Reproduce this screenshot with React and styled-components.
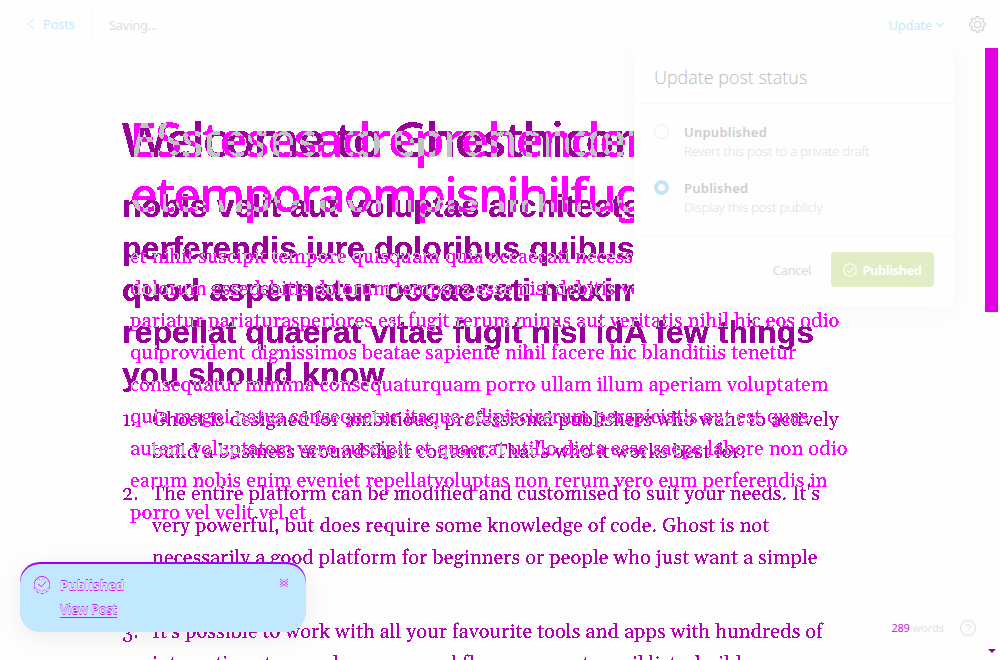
import React from 'react';
import styled, { createGlobalStyle } from 'styled-components';

const Global = createGlobalStyle`
  * { box-sizing: border-box; }
  body { margin: 0; background: #fefefe; font-family: 'Noto Sans', 'Open Sans', sans-serif; }
  p, h1, h2, ol { margin: 0; padding: 0; font-weight: 400; }
`;
const Screen = styled.div`
  position: relative; width: 1000px; height: 660px; overflow: hidden; background: #fefefe;
`;
const Header = styled.header`
  display: flex; align-items: center; height: 48px; padding: 0 14px 0 27px; font-size: 13px;
`;
const BackLink = styled.a`
  display: flex; align-items: center; gap: 8px; height: 36px; width: 65px;
  color: #c4e9fd; border-right: 1px solid #f6f7f8; letter-spacing: -0.2px;
`;
const Saving = styled.span`
  margin: 2px 0 0 17px; color: #dce1e4; letter-spacing: -0.28px;
`;
const UpdateTrigger = styled.span`
  display: flex; align-items: center; gap: 4px; margin: 2px 25px 0 auto; color: #c4e9fd; letter-spacing: -0.2px;
`;

/* Both revisions share one cell; the filter turns their coverage into diff colours. */
const Diff = styled.main`
  display: grid; height: 612px; background: #000; filter: url(#diff-colours);
  overflow: hidden; isolation: isolate;
`;
const Revision = styled.article`
  grid-area: 1 / 1; padding: 63px 0 0 ${p => p.$left}px; color: ${p => p.$channel};
  mix-blend-mode: screen; white-space: nowrap; min-height: 0;
`;
const Title = styled.h1`
  font: 500 48px/55px 'Noto Sans', 'Open Sans', sans-serif; letter-spacing: ${p => p.$track}px;
  -webkit-text-stroke: 0.3px currentColor;
`;
const Subhead = styled.h2`
  margin-top: 19px; font: 700 32px/42px 'Liberation Sans', Arial, sans-serif; letter-spacing: 0.07px;
`;
const Body = styled.p`
  margin-top: 20px; font: 400 20px/32px Gelasio, Georgia, 'Liberation Serif', serif; letter-spacing: 0.095px;
`;
const List = styled.ol`
  margin-top: 9px; color: #00f; list-style: none;
  font: 400 20px/32px Gelasio, Georgia, 'Liberation Serif', serif; letter-spacing: 0.095px;
`;
const Item = styled.li`
  display: grid; grid-template-columns: 30px auto; margin-bottom: 10px;
`;
const Line = styled.span`display: block;`;

const Popover = styled.section`
  position: absolute; left: 634px; top: 46px; width: 320px; height: 261px; background: #fefefe;
  border-radius: 4px; box-shadow: 1px 0 0 #fbfbfb, 0 6px 24px rgba(0, 0, 0, 0.025);
  display: flex; flex-direction: column;
`;
const PopTitle = styled.div`
  height: 58px; padding: 18px 20px 0; border-bottom: 1px solid #f8f9f9;
  font: 300 18px/26px 'Open Sans', 'Noto Sans', sans-serif; color: #b8bbbd; letter-spacing: -0.03px;
`;
const Options = styled.div`
  display: flex; flex-direction: column; gap: 16px; height: 133px; padding: 18px 20px;
  border-bottom: 1px solid #f8f9f9;
`;
const Option = styled.div`display: flex; gap: 15px; height: 40px;`;
const Radio = styled.span`
  width: 15px; height: 15px; margin-top: 2px; border-radius: 50%;
  border: ${p => (p.$on ? '4px solid #c2e5f8' : '1px solid #e6f1f7')};
`;
const OptionName = styled.div`
  font-size: 13px; line-height: 20px; font-weight: 600; color: #cbced0; letter-spacing: 0.24px;
`;
const OptionHint = styled.div`
  font: 300 13px/20px 'Open Sans', 'Noto Sans', sans-serif; margin-top: -1px; color: #d8dde0; letter-spacing: -0.17px;
`;
const Actions = styled.footer`
  display: flex; justify-content: flex-end; align-items: center; gap: 20px; padding: 15px 20px 0;
  font-size: 13px; color: #d8dcdf;
`;
const Cancel = styled.span`margin-top: 1px; letter-spacing: -0.35px;`;
const PublishButton = styled.button`
  display: flex; align-items: center; justify-content: center; gap: 6px; width: 103px; height: 35px;
  padding: 0 1px 0 0; border: 0; border-radius: 4px; background: #e1edc5; color: #fff;
  font: 700 13px 'Noto Sans', sans-serif; letter-spacing: -0.5px;
`;

const Toast = styled.aside`
  position: absolute; left: 20px; top: 564px; width: 286px; height: 68px; border-radius: 20px;
  background: #c2e8ff; box-shadow: 0 -2px 0 #90f, 0 4px 24px rgba(0, 0, 0, 0.07);
  display: flex; gap: 10px; padding: 11px 17px 0 14px;
`;
const ToastText = styled.div`
  flex: 1; display: flex; flex-direction: column; align-items: flex-start; gap: 6px; padding-top: 1px;
  font-size: 13px; line-height: 19px; color: #d6edfc;
  text-shadow: 0 1px 0 #e400f4, 0 -1px 0 #a01cff;
`;
const ToastTitle = styled.span`font-weight: 700; letter-spacing: 0.1px;`;
const ToastLink = styled.a`
  border-bottom: 1px solid #f0f; line-height: 16px; letter-spacing: -0.3px; font-weight: 500;
`;
const ScrollThumb = styled.div`
  position: absolute; right: 2px; top: 48px; width: 13px; height: 264px; background: #e000e0;
`;
const ScrollArrow = styled.div`
  position: absolute; left: 988px; top: 649px; border: solid transparent;
  border-width: 4px 4px 0; border-top-color: #909;
`;
const Status = styled.div`
  position: absolute; right: 24px; top: 620px; display: flex; align-items: center; gap: 16px;
  height: 16px; font-size: 11px; color: #dfe4e7;
`;
const Count = styled.span`
  margin-top: -1px;
  b { font-weight: 400; color: #c828d0; letter-spacing: -0.3px; }
`;

const CheckCircle = ({ size, stroke, width = 1.3 }) => (
  <svg width={size} height={size} viewBox="0 0 16 16" fill="none" stroke={stroke} strokeWidth={width}>
    <circle cx="8" cy="8" r="7.2" />
    <path d="M4.5 8.2 7.2 10.8 11.8 5.7" />
  </svg>
);

const DiffColours = () => (
  <svg width="0" height="0" style={{ display: 'block' }}>
    <filter id="diff-colours" x="0" y="0" width="100%" height="100%" colorInterpolationFilters="sRGB">
      <feComponentTransfer>
        <feFuncR type="discrete" tableValues="0 0 1 1 1" />
        <feFuncG type="discrete" tableValues="0 1 1" />
        <feFuncB type="discrete" tableValues="0 0 1 1 1" />
      </feComponentTransfer>
      <feColorMatrix values="0.333 0.667 0.58 0 0  0.5 0.5 0.5 0 0  0.333 0.667 0.58 0 0  0 0 0 1 0" />
      <feComponentTransfer>
        <feFuncR type="table" tableValues="0.996 1 0.6 0.753" />
        <feFuncG type="table" tableValues="0.996 0 0.77" />
        <feFuncB type="table" tableValues="0.996 1 0.6 0.765" />
      </feComponentTransfer>
    </filter>
  </svg>
);

const title = ['ESstesesadreprehenderit', 'etemporaompisnihilfugit'];
const body = [
  'et nihil suscipit tempore quisquam quia occaecati necess',
  'dolorum essedebitis dolorum tempora esse nisi debitis vo',
  'pariatur pariaturasperiores est fugit rerum minus aut veritatis nihil hic eos odio',
  'quiprovident dignissimos beatae sapiente nihil facere hic blanditiis tenetur',
  'consequatur minima consequaturquam porro ullam illum aperiam voluptatem',
  'quia magni natus consequatur itaque adipiscirerum perspiciatis aut est quas',
  'autem voluptatem vero suscipit et quaerat utillo dicta esse saepe labore non odio',
  'earum nobis enim eveniet repellatvoluptas non rerum vero eum perferendis in',
  'porro vel velit vel et',
];
const subhead = [
  'nobis velit aut voluptas architecto',
  'perferendis iure doloribus quibus',
  'quod aspernatur occaecati maxim',
  'repellat quaerat vitae fugit nisi idA few things',
  'you should know',
];
const items = [
  ['Ghost is designed for ambitious, professional publishers who want to actively',
    'build a business around their content. That\'s who it works best for.'],
  ['The entire platform can be modified and customised to suit your needs. It\'s',
    'very powerful, but does require some knowledge of code. Ghost is not',
    'necessarily a good platform for beginners or people who just want a simple', 'blog.'],
  ['It\'s possible to work with all your favourite tools and apps with hundreds of',
    'integrations to speed up your workflows, connect email lists, build'],
];
const lines = list => list.map(t => <Line key={t}>{t}</Line>);

export default function App() {
  return (
    <Screen>
      <Global />
      <DiffColours />
      <Header>
        <BackLink>
          <svg width="8" height="14" viewBox="0 0 8 14" fill="none" stroke="#c8ebfd"><path d="M7.5 1 1 7l6.500 6" /></svg>
          Posts
        </BackLink>
        <Saving>Saving...</Saving>
        <UpdateTrigger>
          Update
          <svg width="8" height="6" viewBox="0 0 8 6" fill="none" stroke="#c4e9fd" strokeWidth="1.200"><path d="m.5 1 3.500 3.500L7.500 1" /></svg>
        </UpdateTrigger>
        <svg width="17" height="17" viewBox="0 0 24 24" fill="none" stroke="#cdd3d6" strokeWidth="1.500">
          <circle cx="12" cy="12" r="4.500" />
          <path d="m9.700 3.200.6-2.500h3.400l.6 2.500c.2.800 1.300 1.300 2.100.8l2.200-1.300 2.400 2.400-1.300 2.200c-.5.800 0 1.900.8 2.100l2.500.9v3.400l-2.500.6c-.8.200-1.300 1.300-.8 2.100l1.300 2.200-2.400 2.400-2.200-1.300c-.8-.5-1.900 0-2.100.8l-.6 2.500h-3.400l-.6-2.500c-.2-.8-1.300-1.300-2.100-.8L5.400 21 3 18.600l1.300-2.200c.5-.8 0-1.900-.8-2.100L1 13.700v-3.400l2.500-.9c.8-.2 1.300-1.300.8-2.100L3 5.100l2.400-2.400L7.600 4c.8.500 1.900 0 2.100-.8Z" />
        </svg>
      </Header>

      <Diff>
        <Revision $left={130} $channel="#f00">
          <Title $track={-1.35}>{lines(title)}</Title>
          <Body>{lines(body)}</Body>
        </Revision>
        <Revision $left={122} $channel="#0f0">
          <Title $track={-1.2}>Welcome to Ghosthicor</Title>
          <Subhead>{lines(subhead)}</Subhead>
          <List>
            {items.map((item, i) => (
              <Item key={i}><span>{i + 1}.</span><div>{lines(item)}</div></Item>
            ))}
          </List>
        </Revision>
      </Diff>

      <Popover>
        <PopTitle>Update post status</PopTitle>
        <Options>
          <Option>
            <Radio />
            <div><OptionName>Unpublished</OptionName><OptionHint>Revert this post to a private draft</OptionHint></div>
          </Option>
          <Option>
            <Radio $on />
            <div><OptionName>Published</OptionName><OptionHint>Display this post publicly</OptionHint></div>
          </Option>
        </Options>
        <Actions>
          <Cancel>Cancel</Cancel>
          <PublishButton><CheckCircle size={14} stroke="#fff" />Published</PublishButton>
        </Actions>
      </Popover>

      <ScrollThumb />
      <ScrollArrow />
      <Toast>
        <svg width="16" height="20" viewBox="0 0 16 20" fill="none" strokeWidth="1">
          <g stroke="#c31cf5"><circle cx="8" cy="9" r="7.500" /><path d="m4 9 3.500 3L12 6.500" /></g>
          <g stroke="#c31cf5"><circle cx="8" cy="11" r="7.500" strokeDasharray="3 2" /></g>
          <g stroke="#eff4f8"><circle cx="8" cy="10" r="7" /><path d="m4 10.500 3.500 3L12 8" /></g>
        </svg>
        <ToastText>
          <ToastTitle>Published</ToastTitle>
          <ToastLink>View Post</ToastLink>
        </ToastText>
        <svg width="10" height="12" viewBox="0 0 10 12" fill="none">
          <path d="m1 5 8 8M9 5 1 13" stroke="none" />
          <g transform="translate(0 4) scale(1 .75)">
            <path d="m1 0 8 8M9 0 1 8" stroke="#b31cf8" /><path d="m1 3 8 8M9 3 1 11" stroke="#e414f4" /><path d="m1 1.500 8 8M9 1.500 1 9.500" stroke="#dceffa" />
          </g>
        </svg>
      </Toast>
      <Status>
        <Count><b>289</b> words</Count>
        <svg width="16" height="16" viewBox="0 0 16 16" fill="none" stroke="#d9dfe2">
          <circle cx="8" cy="8" r="7.500" /><path d="M5.800 6.300a2.200 2.200 0 1 1 3.200 2c-.7.400-1 .7-1 1.700" /><path d="M8 11.300v1.200" />
        </svg>
      </Status>
    </Screen>
  );
}
